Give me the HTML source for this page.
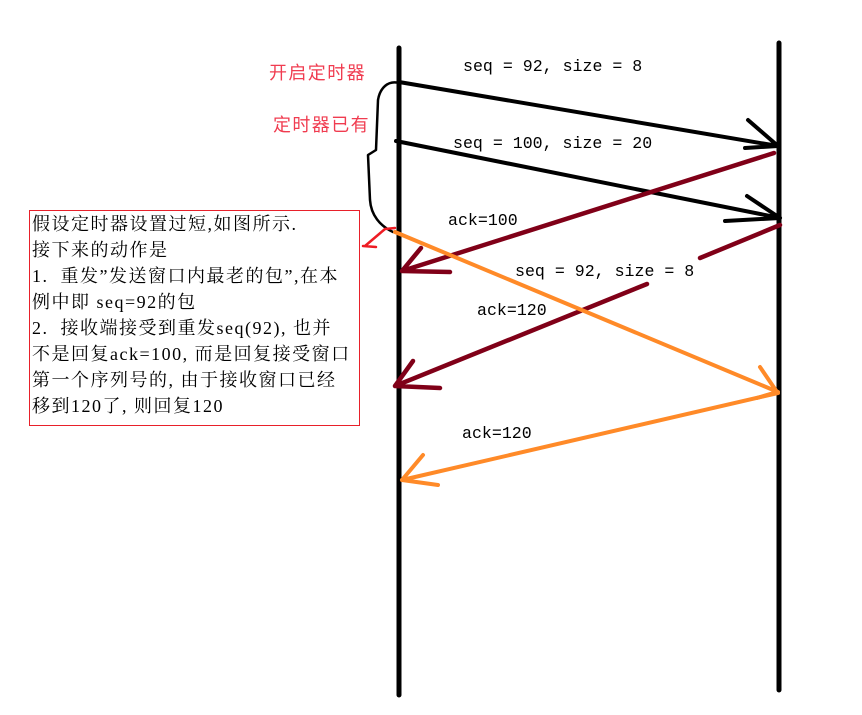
<!DOCTYPE html>
<html><head><meta charset="utf-8"><style>
html,body{margin:0;padding:0;background:#fff;width:862px;height:715px;overflow:hidden}
svg{position:absolute;left:0;top:0}
.t{font-family:"Liberation Mono","Noto Serif CJK SC",monospace;font-size:16.6px;fill:#000}
.r{font-family:"Noto Sans CJK SC",sans-serif;font-size:18px;letter-spacing:1.4px;fill:#f03c50}
.box{position:absolute;left:29px;top:210px;width:331px;height:216px;border:1px solid #e8202a;box-sizing:border-box;font-family:"Liberation Serif","Noto Serif CJK SC",serif;font-size:18px;letter-spacing:1.5px;line-height:26px;padding:0 0 0 2px;color:#000;white-space:nowrap}
</style></head><body>
<svg width="862" height="715" viewBox="0 0 862 715">
<g stroke-linecap="round" stroke-linejoin="round" fill="none">
<line x1="399" y1="48" x2="399" y2="695" stroke="#000" stroke-width="5"/>
<line x1="779" y1="43" x2="779" y2="690" stroke="#000" stroke-width="5"/>
<path d="M399 82 L778 146 M748 120 L778 146 L745 148" stroke="#000" stroke-width="4"/>
<path d="M396 141 L780 218 M747 196 L780 218 L725 221" stroke="#000" stroke-width="4"/>
<path d="M399 83 C388 80 380 88 378 100 L376 150 L368 155 L370 200 C371 215 380 226 393 232" stroke="#000" stroke-width="2.5"/>
<path d="M774 153 L402 271 M421 248 L402 271 L450 272" stroke="#800018" stroke-width="4.5"/>
<path d="M780 225 L700 258 M647 284 L395 386 M413 361 L395 386 L440 388" stroke="#800018" stroke-width="4.5"/>
<path d="M395 232 L778 392 M760 367 L777 392 L757 398" stroke="#ff8a28" stroke-width="4"/>
<path d="M778 393 L402 480 M423 455 L402 480 L438 485" stroke="#ff8a28" stroke-width="4"/>
<path d="M395 228 L385 229 L365 246 M363 246 L376 247" stroke="#ee1c24" stroke-width="2.5"/>
</g>
<text class="r" x="269" y="79">开启定时器</text>
<text class="r" x="273" y="131">定时器已有</text>
<text class="t" x="463" y="71">seq = 92, size = 8</text>
<text class="t" x="453" y="148">seq = 100, size = 20</text>
<text class="t" x="448" y="225">ack=100</text>
<text class="t" x="515" y="276">seq = 92, size = 8</text>
<text class="t" x="477" y="315">ack=120</text>
<text class="t" x="462" y="438">ack=120</text>
</svg>
<div class="box">假设定时器设置过短,如图所示.<br>接下来的动作是<br>1.&nbsp; 重发”发送窗口内最老的包”,在本<br>例中即 seq=92的包<br>2.&nbsp; 接收端接受到重发seq(92), 也并<br>不是回复ack=100, 而是回复接受窗口<br>第一个序列号的, 由于接收窗口已经<br>移到120了, 则回复120</div>
</body></html>
